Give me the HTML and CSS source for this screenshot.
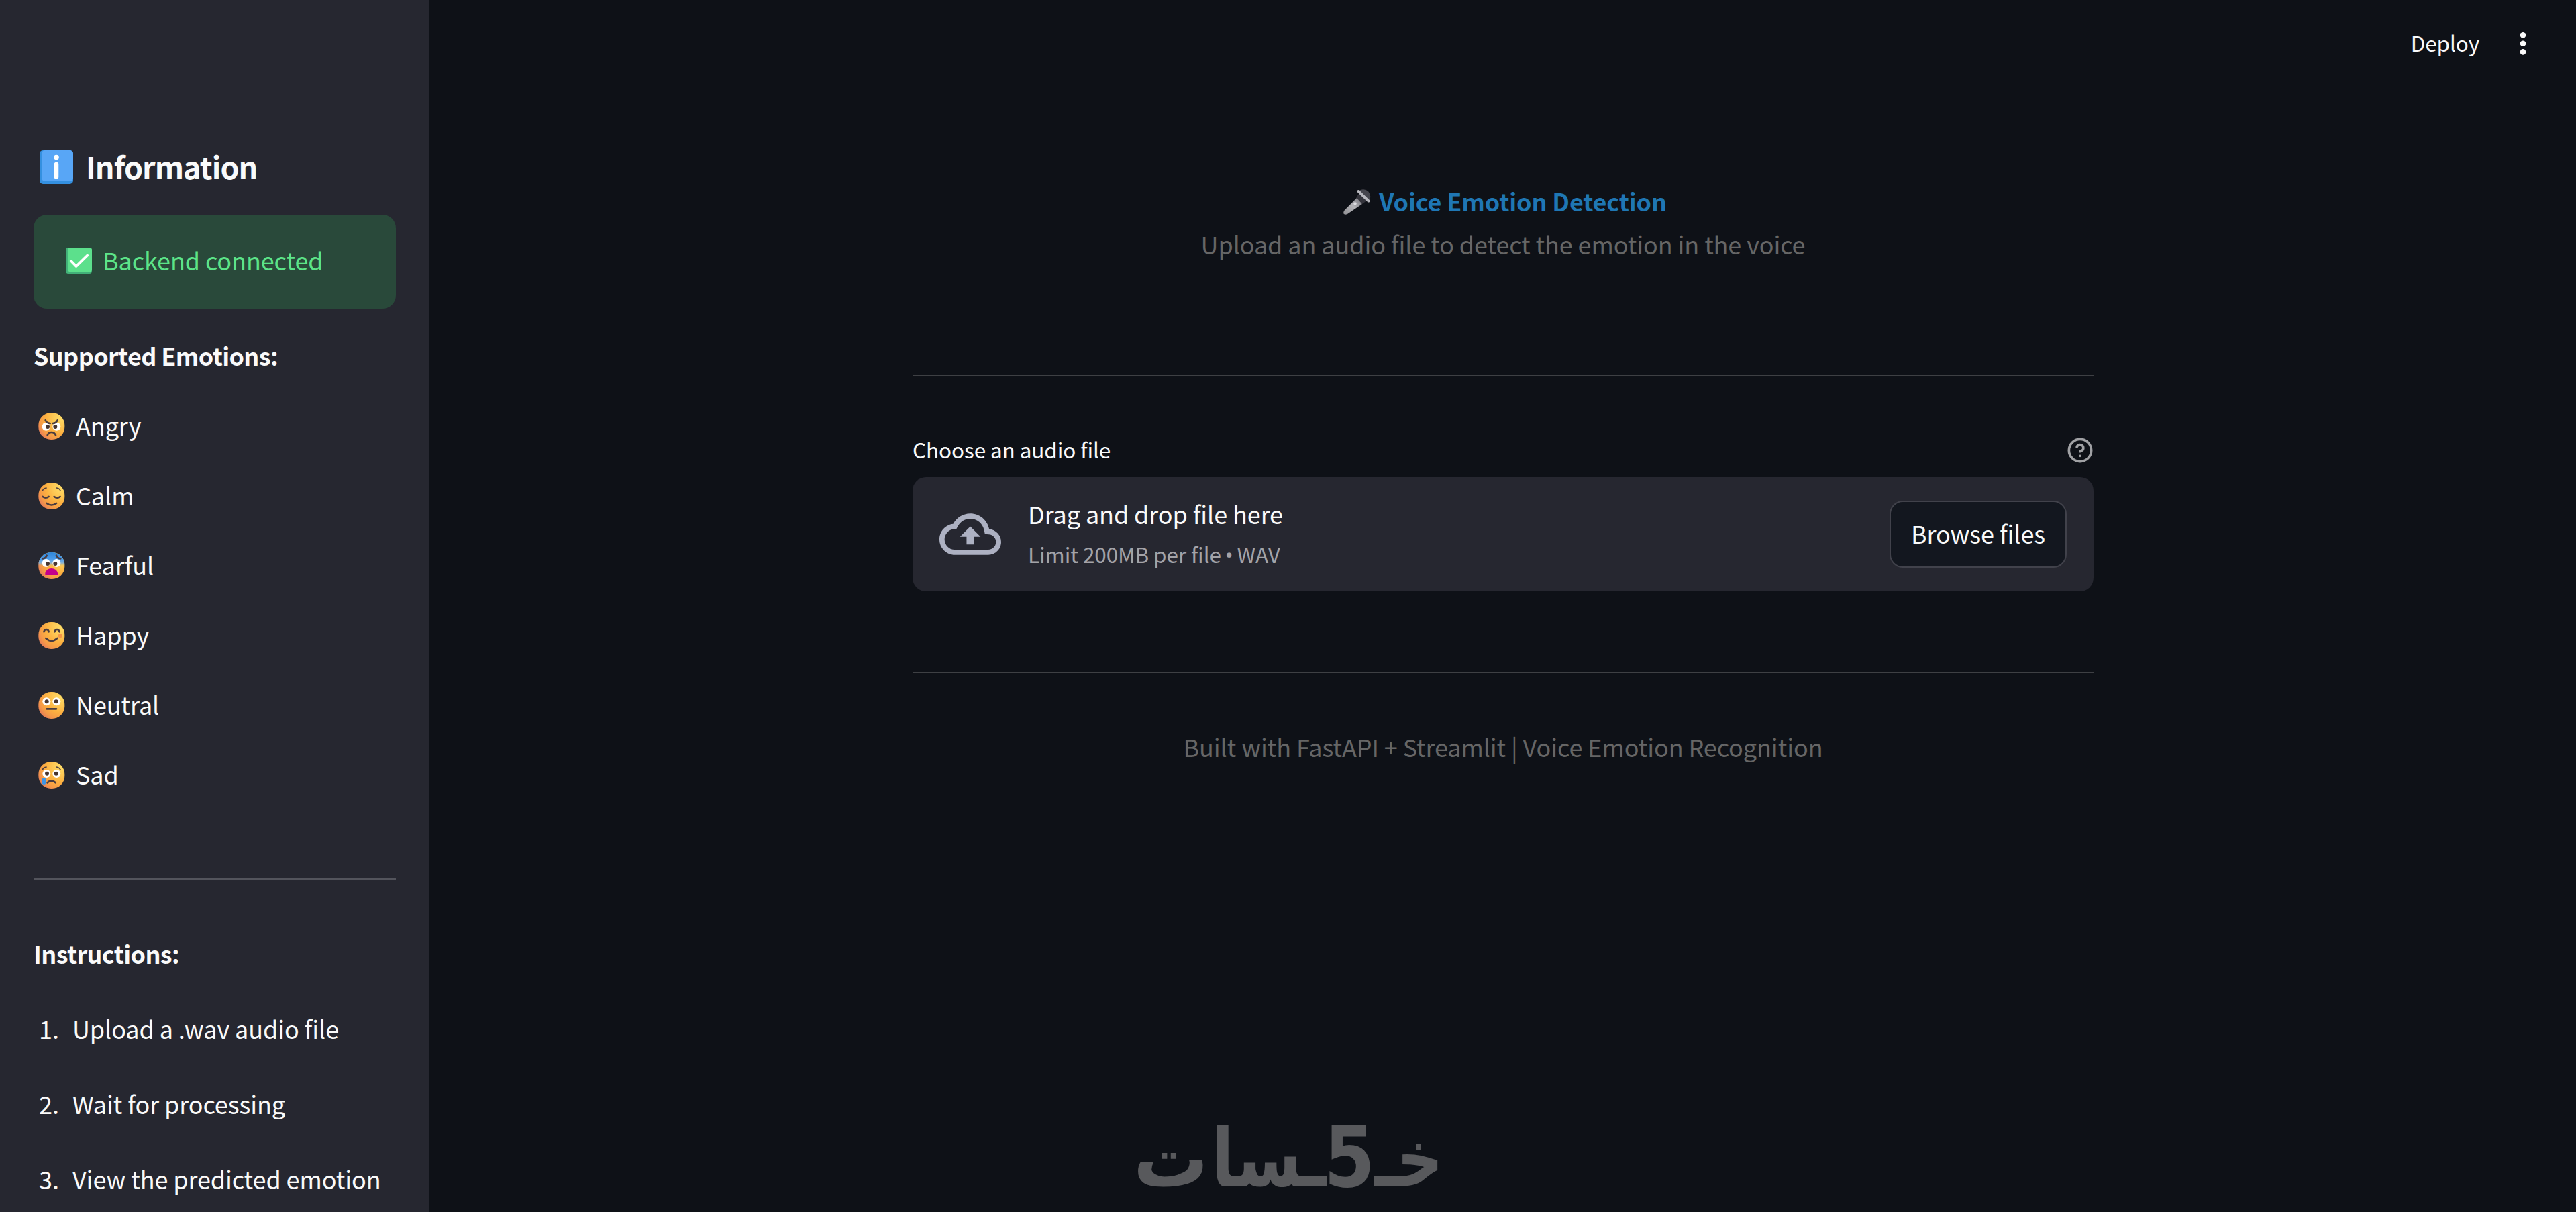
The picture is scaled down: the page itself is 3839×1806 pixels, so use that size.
FILE: index.html
```
<!DOCTYPE html>
<html lang="en">
<head>
    <meta charset="utf-8">
    <title>Voice Emotion Detection</title>
    <link rel="stylesheet" href="styles.css">
</head>

<body>
    <!-- shared gradients for the emoji -->
    <svg class="defs" width="0" height="0">
        <defs>
            <radialGradient id="skin" cx="0.85" cy="0.2" r="0.95">
                <stop offset="0" stop-color="#ffdc66"/>
                <stop offset="0.35" stop-color="#fdc652"/>
                <stop offset="0.6" stop-color="#fcb040"/>
                <stop offset="0.85" stop-color="#f59a48"/>
                <stop offset="1" stop-color="#ea8155"/>
            </radialGradient>
            <linearGradient id="cold" x1="0" y1="0" x2="0" y2="1">
                <stop offset="0" stop-color="#2f86d8"/>
                <stop offset="0.25" stop-color="#4a9cec"/>
                <stop offset="0.38" stop-color="#7fb0dc"/>
                <stop offset="0.5" stop-color="#7fb0dc" stop-opacity="0"/>
            </linearGradient>
            <linearGradient id="mic" x1="0" y1="1" x2="1" y2="0">
                <stop offset="0" stop-color="#8e8e92"/>
                <stop offset="0.5" stop-color="#b4b4b8"/>
                <stop offset="1" stop-color="#707078"/>
            </linearGradient>
            <symbol id="face" viewBox="0 0 120 120"><rect x="1" y="0" width="117" height="120" rx="56" fill="url(#skin)"/></symbol>
        </defs>
    </svg>

    <div class="app">
        <aside class="sidebar">
            <h2 class="sidebar-title">
                <svg class="info-icon" viewBox="0 0 50 50">
                    <rect width="50" height="50" rx="5" fill="#3490e0"/>
                    <rect x="3" width="47" height="46" rx="5" fill="#58a6f6"/>
                    <circle cx="25" cy="10.5" r="3.8" fill="#fff"/>
                    <path d="M25 21V39.5" stroke="#fff" stroke-width="6.5" stroke-linecap="round"/>
                </svg>
                <span>Information</span>
            </h2>

            <div class="alert">
                <svg class="check-icon" viewBox="0 0 40 40">
                    <rect width="40" height="40" rx="4" fill="#42b078"/>
                    <rect x="3" width="37" height="37" rx="4" fill="#5ce08c"/>
                    <path d="M8 20.5l8 8L33 12" fill="none" stroke="#fff" stroke-width="4" stroke-linecap="round" stroke-linejoin="round"/>
                </svg>
                <span>Backend connected</span>
            </div>

            <p class="label emotions-label">Supported Emotions:</p>
            <ul class="emotions">
                <li>
                    <svg class="emoji" viewBox="0 0 120 120">
                        <use href="#face"/>
                        <g class="eye"><circle cx="35" cy="62" r="18"/><circle cx="82" cy="62" r="18"/></g>
                        <g class="pupil"><circle cx="42" cy="63" r="9"/><circle cx="76" cy="63" r="9"/></g>
                        <path class="line" d="M32 34Q38 48 53 48M86 34Q80 48 65 48M41 100Q46 87 59 87Q73 87 78 100"/>
                    </svg>
                    Angry
                </li>
                <li>
                    <svg class="emoji" viewBox="0 0 120 120">
                        <use href="#face"/>
                        <path class="line thin" d="M19 36Q24 25 36 24M82 24Q94 25 99 36"/>
                        <path class="line" d="M20 63Q33 73 47 63M71 63Q85 73 98 63M38 93Q59 108 81 93"/>
                    </svg>
                    Calm
                </li>
                <li>
                    <svg class="emoji" viewBox="0 0 120 120">
                        <use href="#face"/>
                        <rect x="1" y="0" width="117" height="120" rx="56" fill="url(#cold)"/>
                        <path class="line" d="M19 28Q34 28 38 14M81 14Q86 28 100 28"/>
                        <g class="eye"><circle cx="35" cy="48" r="18"/><circle cx="82" cy="48" r="18"/></g>
                        <g class="pupil"><circle cx="42" cy="51" r="9"/><circle cx="76" cy="51" r="9"/></g>
                        <path d="M31 102V92Q38 72 59 72Q80 72 87 92V102Z" fill="#c4008c"/>
                    </svg>
                    Fearful
                </li>
                <li>
                    <svg class="emoji" viewBox="0 0 120 120">
                        <use href="#face"/>
                        <circle cx="98" cy="61" r="9" fill="#f59548"/>
                        <path class="line" d="M25 43Q28 33 36 33Q45 33 47 43M73 43Q76 33 84 33Q92 33 95 43M34 72Q59 95 85 72"/>
                    </svg>
                    Happy
                </li>
                <li>
                    <svg class="emoji" viewBox="0 0 120 120">
                        <use href="#face"/>
                        <g class="eye"><circle cx="37" cy="43" r="18"/><circle cx="82" cy="43" r="18"/></g>
                        <g class="pupil"><circle cx="38" cy="43" r="9"/><circle cx="80" cy="43" r="9"/></g>
                        <path class="line" d="M38 76H81"/>
                    </svg>
                    Neutral
                </li>
                <li>
                    <svg class="emoji" viewBox="0 0 120 120">
                        <use href="#face"/>
                        <path class="line thin" d="M20 34Q24 25 36 24M81 24Q93 25 99 36"/>
                        <g class="eye"><circle cx="37" cy="54" r="18"/><circle cx="82" cy="54" r="18"/></g>
                        <g class="pupil"><circle cx="39" cy="53" r="9"/><circle cx="80" cy="53" r="9"/></g>
                        <path class="line" d="M41 94Q59 77 77 94"/>
                        <rect x="17" y="73" width="17" height="29" rx="8" fill="#3f94e4"/>
                    </svg>
                    Sad
                </li>
            </ul>

            <hr>

            <p class="label steps-label">Instructions:</p>
            <ol class="steps">
                <li><span class="num">1.</span>Upload a .wav audio file</li>
                <li><span class="num">2.</span>Wait for processing</li>
                <li><span class="num">3.</span>View the predicted emotion</li>
            </ol>
        </aside>

        <main class="main">
            <header class="toolbar">
                <span>Deploy</span>
                <svg class="menu-icon" viewBox="0 0 10 36">
                    <circle cx="5" cy="5.3" r="4.3"/><circle cx="5" cy="17.8" r="4.3"/><circle cx="5" cy="30.4" r="4.3"/>
                </svg>
            </header>

            <div class="content">
                <h1 class="title">
                    <svg class="mic-icon" viewBox="0 0 41 38">
                        <path d="M0 36Q0 33 2 31L21 12L28 22L6 37Q2 39 0 36Z" fill="url(#mic)"/>
                        <path d="M19 12L24 6L35 17L28 22Z" fill="#34343c"/>
                        <path d="M23 2Q30-2 37 3Q43 10 38 18Z" fill="#46464e"/>
                        <path d="M22.5 3L37.5 17.5" stroke="#b8b8be" stroke-width="4" stroke-linecap="round"/>
                        <circle cx="17.5" cy="21.5" r="2.2" fill="#dcdce0"/>
                    </svg>
                    <span>Voice Emotion Detection</span>
                </h1>
                <p class="subtitle">Upload an audio file to detect the emotion in the voice</p>

                <hr>

                <div class="upload-label">
                    <span>Choose an audio file</span>
                    <svg class="help-icon" viewBox="0 0 24 24">
                        <circle cx="12" cy="12" r="10"/>
                        <path d="M9.09 9a3 3 0 0 1 5.83 1c0 2-3 3-3 3M12 17h.01"/>
                    </svg>
                </div>
                <div class="dropzone">
                    <svg class="cloud-icon" viewBox="0 0 24 24">
                        <path d="M19.35 10.04C18.67 6.59 15.64 4 12 4 9.11 4 6.6 5.64 5.35 8.04 2.34 8.36 0 10.91 0 14c0 3.31 2.69 6 6 6h13c2.76 0 5-2.24 5-5 0-2.64-2.05-4.78-4.65-4.96zM19 18H6c-2.21 0-4-1.79-4-4 0-2.05 1.53-3.76 3.56-3.97l1.07-.11.5-.95C8.08 7.14 9.94 6 12 6c2.62 0 4.88 1.86 5.39 4.43l.3 1.5 1.53.11c1.56.1 2.78 1.41 2.78 2.96 0 1.65-1.35 3-3 3zM8 13h2.55v3h2.9v-3H16l-4-4z"/>
                    </svg>
                    <div class="drop-text">
                        <div>Drag and drop file here</div>
                        <div class="limit">Limit 200MB per file <span class="bullet">•</span> WAV</div>
                    </div>
                    <button class="browse">Browse files</button>
                </div>

                <hr>

                <p class="footer">Built with FastAPI + Streamlit | Voice Emotion Recognition</p>
            </div>
        </main>

        <!-- watermark over the page -->
        <svg class="watermark" viewBox="0 0 460 130">
            <text x="0" y="92" textLength="112" lengthAdjust="spacingAndGlyphs">ت</text>
            <text x="116" y="92" textLength="172" lengthAdjust="spacingAndGlyphs">ـسا</text>
            <text class="five" x="284" y="92" textLength="76" lengthAdjust="spacingAndGlyphs">5</text>
            <text x="359" y="92" textLength="103" lengthAdjust="spacingAndGlyphs">خـ</text>
        </svg>
    </div>
</body>
</html>
```
FILE: styles.css
```
* {
    box-sizing: border-box;
    margin: 0;
    padding: 0;
}
body {
    background-color: #0e1117;
    color: #fafafa;
    font-family: "Noto Sans CJK SC", "Noto Sans", sans-serif;
    font-size: 36px;
    line-height: 64px;
    letter-spacing: -0.1px;
    white-space: nowrap;
}
svg {
    display: block;
    flex: none;
}
.defs {
    position: absolute;
}
.app {
    position: relative;
    display: flex;
    height: 1806px;
    overflow: hidden;
}
hr {
    border: none;
    height: 2px;
    background-color: #3e4044;
}

/* sidebar */
.sidebar {
    width: 640px;
    flex: none;
    padding: 218px 50px 0;
    background-color: #262730;
}
.sidebar-title {
    display: flex;
    align-items: center;
    font-size: 45px;
    line-height: 60px;
    letter-spacing: -1px;
    padding-left: 9px;
}
.info-icon {
    width: 50px;
    height: 50px;
    margin: 2px 19px 0 0;
}
.alert {
    display: flex;
    height: 140px;
    margin-top: 42px;
    padding: 35px 48px;
    border-radius: 20px;
    background-color: #29493a;
    color: #5ce488;
}
.check-icon {
    width: 39px;
    height: 39px;
    margin: 14px 16px 0 0;
}
.label {
    font-weight: bold;
    letter-spacing: -0.65px;
}
.emotions-label {
    margin-top: 37px;
}
.emotions {
    display: flex;
    flex-direction: column;
    gap: 40px;
    margin-top: 40px;
    list-style: none;
}
.emotions li {
    display: flex;
    padding-left: 7px;
}
.emoji {
    width: 40px;
    height: 40px;
    margin: 14px 16px 0 0;
}
.eye {
    fill: #fff;
}
.pupil {
    fill: #48352f;
}
.line {
    fill: none;
    stroke: #4a3c40;
    stroke-width: 8;
    stroke-linecap: round;
}
.thin {
    stroke-width: 5;
}
.sidebar hr {
    margin-top: 124px;
    background-color: #53545c;
}
.steps-label {
    margin-top: 77px;
}
.steps {
    display: flex;
    flex-direction: column;
    gap: 48px;
    margin-top: 48px;
    list-style: none;
}
.steps li {
    display: flex;
    padding-left: 8px;
}
.num {
    width: 50px;
}

/* main */
.main {
    flex: 1;
}
.toolbar {
    display: flex;
    justify-content: flex-end;
    height: 128px;
    padding: 35px 74px 0 0;
    font-size: 31.5px;
    line-height: 56px;
}
.menu-icon {
    width: 10px;
    height: 36px;
    margin: 12px 0 0 60px;
    fill: #fafafa;
}
.content {
    width: 1760px;
    margin: 139px 0 0 720px;
}
.title {
    display: flex;
    justify-content: center;
    padding-left: 6px;
    font-size: 36px;
    line-height: 64px;
    letter-spacing: -0.15px;
    color: #1f77b4;
}
.mic-icon {
    width: 41px;
    height: 38px;
    margin: 15px 12px 0 0;
}
.subtitle,
.footer {
    text-align: center;
    color: #666;
}
.subtitle + hr {
    margin-top: 164px;
}
.upload-label {
    display: flex;
    justify-content: space-between;
    align-items: center;
    margin: 80px 0 14px;
    font-size: 31.5px;
    line-height: 56px;
}
.help-icon {
    width: 40px;
    height: 40px;
    margin-top: 4px;
    fill: none;
    stroke: #a0a1a4;
    stroke-width: 2.2;
    stroke-linecap: round;
    stroke-linejoin: round;
}
.dropzone {
    display: flex;
    align-items: center;
    height: 170px;
    padding: 0 40px;
    border-radius: 20px;
    background-color: #262730;
}
.cloud-icon {
    width: 92px;
    height: 92px;
    margin-right: 40px;
    fill: #adb1c2;
}
.drop-text {
    flex: 1;
    padding-bottom: 5px;
}
.limit {
    font-size: 31.5px;
    line-height: 56px;
    color: #a3a3a8;
}
.bullet {
    font-family: "Noto Sans", sans-serif;
    margin: 0 -1px;
}
.browse {
    width: 264px;
    height: 100px;
    padding-bottom: 5px;
    border: 2px solid #41424b;
    border-radius: 20px;
    background-color: #13171f;
    color: #fafafa;
    font: inherit;
    letter-spacing: inherit;
}
.dropzone + hr {
    margin-top: 120px;
}
.footer {
    margin-top: 77px;
}

.watermark {
    position: absolute;
    left: 1689px;
    top: 1676px;
    width: 460px;
    height: 130px;
    overflow: visible;
    fill: #58595c;
    font-family: "DejaVu Sans", sans-serif;
    font-size: 120px;
    font-weight: bold;
    letter-spacing: 0;
}
.five {
    font-size: 126px;
}
```
